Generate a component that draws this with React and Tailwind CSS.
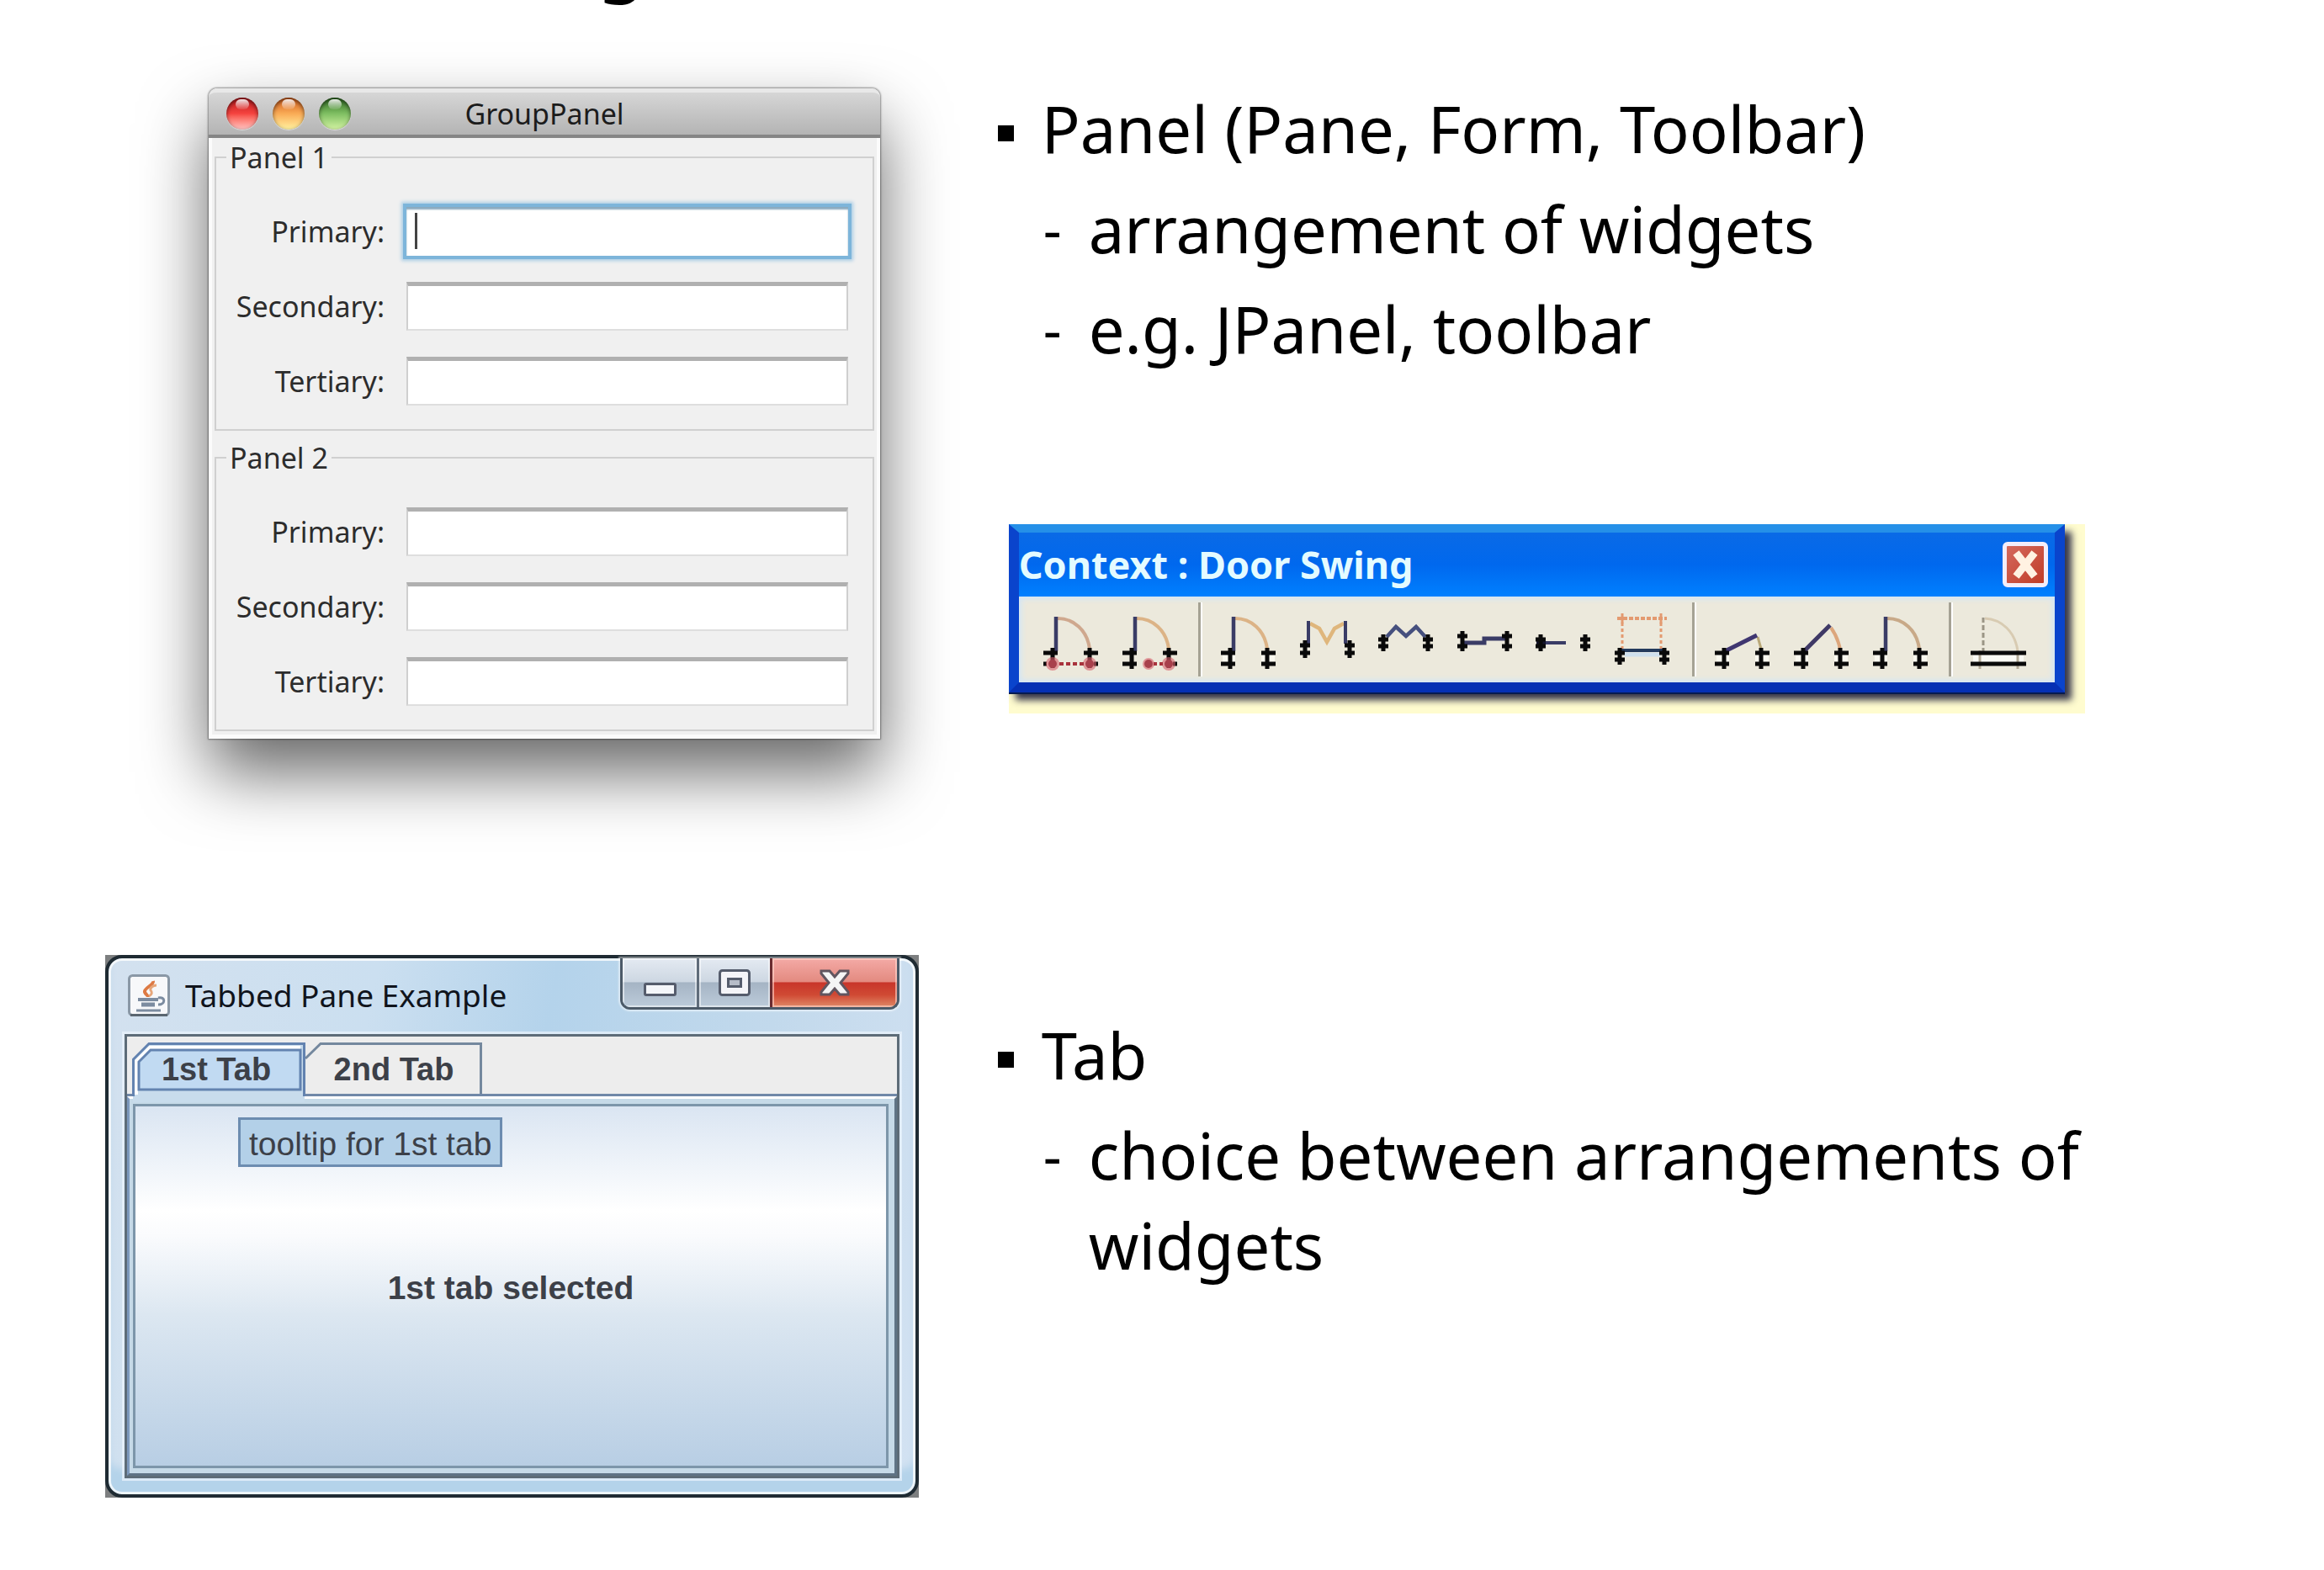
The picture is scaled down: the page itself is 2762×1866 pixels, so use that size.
import React from 'react';

const TALL = 'M14 67H31M14 80H31M25 61V86M62 67H79M62 80H79M69 61V86';

function Posts() {
  return (
    <>
      <path d="M16 73.500H31M62 73.500H78" stroke="#faf8ef" strokeWidth="8" />
      <path d={TALL} stroke="#0a0a0a" strokeWidth="5" fill="none" />
    </>
  );
}

function SmallPost({ x, y, gap = 8 }) {
  return (
    <path
      d={`M${x - 6} ${y}h12M${x - 6} ${y + gap}h12M${x} ${y - 6}v${gap + 12}`}
      stroke="#0a0a0a"
      strokeWidth="5"
      fill="none"
    />
  );
}

function Door({ arc = '#dcb386' }) {
  return (
    <g fill="none">
      <path d="M31 26C50 26 66 40 69 62" stroke={arc} strokeWidth="4" />
      <path d="M29 24V65" stroke="#3a3c66" strokeWidth="4.5" />
    </g>
  );
}

const tools = [
  [
    {
      name: 'Single swing, full width',
      art: (
        <>
          <Door arc="#cfa88e" />
          <path d="M14 67H31M25 61V85M62 67H79M69 61V85M14 80h4M74 80h5" stroke="#0a0a0a" strokeWidth="5" />
          <circle cx="25" cy="80" r="8" fill="#d8606c" fillOpacity="0.6" />
          <circle cx="69" cy="80" r="8" fill="#d8606c" fillOpacity="0.6" />
          <path d="M33 80H63" stroke="#a8323c" strokeWidth="4" strokeDasharray="5 3" />
          <circle cx="25" cy="80" r="5" fill="#a8404c" />
          <circle cx="69" cy="80" r="5" fill="#a8404c" />
        </>
      ),
    },
    {
      name: 'Single swing, part width',
      art: (
        <>
          <Door />
          <path d="M14 67H31M14 80H31M25 61V86M62 67H79M69 61V85M74 80h5" stroke="#0a0a0a" strokeWidth="5" />
          <circle cx="45" cy="80" r="7" fill="#d8606c" fillOpacity="0.6" />
          <circle cx="69" cy="80" r="8" fill="#d8606c" fillOpacity="0.6" />
          <path d="M51 80H64" stroke="#a8323c" strokeWidth="4" strokeDasharray="4 3" />
          <circle cx="45" cy="80" r="5" fill="#a8404c" />
          <circle cx="69" cy="80" r="5" fill="#a8404c" />
        </>
      ),
    },
  ],
  [
    { name: 'Single swing', art: (<><Door /><Posts /></>) },
    {
      name: 'Double swing',
      art: (
        <>
          <path d="M26 32L37 38L46 54L55 38L66 32" fill="none" stroke="#dfb67c" strokeWidth="4.5" />
          <path d="M24 29V56M68 29V56" stroke="#3a3c66" strokeWidth="4" />
          <SmallPost x={20} y={58} gap={9} />
          <SmallPost x={73} y={58} gap={9} />
        </>
      ),
    },
    {
      name: 'Bifold',
      art: (
        <>
          <path d="M23 48L34 36L46 47L58 36L69 48" fill="none" stroke="#46507e" strokeWidth="4.5" />
          <SmallPost x={19} y={51} />
          <SmallPost x={72} y={51} />
        </>
      ),
    },
    {
      name: 'Bypass sliding',
      art: (
        <>
          <path d="M20 55H45V50H71" fill="none" stroke="#3a3c66" strokeWidth="5" />
          <SmallPost x={19} y={47} gap={12} />
          <SmallPost x={72} y={47} gap={12} />
        </>
      ),
    },
    {
      name: 'Pocket',
      art: (
        <>
          <path d="M18 55H48" stroke="#3a3c66" strokeWidth="4" />
          <path d="M13 51h11v8h-11z" fill="#14142c" />
          <SmallPost x={18} y={51} />
          <SmallPost x={71} y={51} />
        </>
      ),
    },
    {
      name: 'Overhead',
      art: (
        <>
          <g fill="none" stroke="#e39a70">
            <path d="M15 26H74" strokeWidth="4" strokeDasharray="5 2" />
            <path d="M21 31V62M67 31V62" strokeWidth="3" strokeDasharray="4 3" />
            <path d="M21 20V32M67 20V32" strokeWidth="3" />
          </g>
          <path d="M24 69H66" stroke="#cfe0ee" strokeWidth="5" />
          <path d="M18 64H72" stroke="#233a5c" strokeWidth="4" />
          <SmallPost x={18} y={67} />
          <SmallPost x={71} y={67} />
        </>
      ),
    },
  ],
  [
    {
      name: 'Swing 30 degrees',
      art: (
        <>
          <path d="M65 48L69 62" stroke="#b9a878" strokeWidth="3" />
          <path d="M26 65L64 46" stroke="#3f3670" strokeWidth="5" />
          <Posts />
        </>
      ),
    },
    {
      name: 'Swing 60 degrees',
      art: (
        <>
          <path d="M58 37Q66 48 69 63" fill="none" stroke="#dca67c" strokeWidth="4" />
          <path d="M26 65L57 34" stroke="#3f3966" strokeWidth="5" />
          <Posts />
        </>
      ),
    },
    { name: 'Swing 90 degrees', art: (<><Door arc="#c8a988" /><Posts /></>) },
  ],
  [
    {
      name: 'Opening only',
      art: (
        <>
          <path d="M30 26C50 27 66 42 69 65" fill="none" stroke="#d8cbb2" strokeWidth="3" />
          <path d="M28 25V65" stroke="#9b9686" strokeWidth="3" strokeDasharray="6 3" />
          <path d="M16 74H76" stroke="#fafaf4" strokeWidth="8" />
          <path d="M24 64V86M69 64V86" stroke="#b4ab98" strokeWidth="3" />
          <path d="M13 67H79M13 80H79" stroke="#0a0a0a" strokeWidth="5" />
        </>
      ),
    },
  ],
];

function Light({ label, className }) {
  return (
    <button
      type="button"
      aria-label={label}
      className={`relative size-[38px] overflow-hidden rounded-full shadow-[inset_0_2px_5px_rgba(0,0,0,0.55),0_1px_1px_rgba(255,255,255,0.5)] ${className}`}
    >
      <span className="absolute top-[2px] left-[11px] h-[12px] w-[16px] rounded-full bg-gradient-to-b from-white/90 to-white/10" />
    </button>
  );
}

function Field({ id, label, focused }) {
  return (
    <>
      <label htmlFor={id} className="text-right">{label}</label>
      <div className="relative">
        <input
          id={id}
          type="text"
          className={
            focused
              ? 'block h-[58px] w-full bg-white px-3 caret-transparent shadow-[inset_0_3px_2px_#8aaabf,0_0_0_4px_#7db5da,0_0_4px_6px_#a9cde5] outline-none'
              : 'block h-[58px] w-full border-x-2 border-t-[5px] border-b-2 border-x-[#cfcfcf] border-t-[#b0b0b0] border-b-[#dedede] bg-white px-3 outline-none'
          }
        />
        {focused && <span className="absolute top-[7px] left-[10px] h-[43px] w-[3px] bg-[#444]" />}
      </div>
    </>
  );
}

function FormPanel({ id, title, focusFirst }) {
  return (
    <fieldset className="border-2 border-[#d0d0d0]">
      <legend className="ml-[12px] px-[4px] leading-[42px]">{title}</legend>
      <div className="grid grid-cols-[200px_1fr] items-center gap-x-[26px] gap-y-[31px] pt-[38px] pr-[29px] pb-[28px]">
        <Field id={`${id}-primary`} label="Primary:" focused={focusFirst} />
        <Field id={`${id}-secondary`} label="Secondary:" />
        <Field id={`${id}-tertiary`} label="Tertiary:" />
      </div>
    </fieldset>
  );
}

function GroupPanelWindow() {
  return (
    <div className="w-[798px] rounded-t-[10px] bg-[#f0f0f0] text-[34px] text-[#2c2c2c] shadow-[0_0_2px_1px_rgba(0,0,0,0.4),0_40px_80px_rgba(0,0,0,0.6)]">
      <div className="flex h-[59px] items-center rounded-t-[10px] border-t-[5px] border-b-4 border-t-[#e8e8e8] border-b-[#858585] bg-gradient-to-b from-[#d6d6d6] to-[#b4b4b4] px-[21px]">
        <div className="flex w-[174px] gap-[17px]">
          <Light label="Close" className="bg-gradient-to-b from-[#b8141c] via-[#f5433f] to-[#ffc4c4]" />
          <Light label="Minimize" className="bg-gradient-to-b from-[#cf5a18] via-[#f9ab56] to-[#fff3a0]" />
          <Light label="Zoom" className="bg-gradient-to-b from-[#2c6b20] via-[#7fbf62] to-[#d4f5a4]" />
        </div>
        <h2 className="flex-1 pr-[174px] pl-[-10px] text-center leading-[40px] text-[#1c1c1c]">GroupPanel</h2>
      </div>
      <form className="flex flex-col gap-[11px] border-x-4 border-b-[5px] border-white/70 px-[3px] pt-[2px] pb-[4px]">
        <FormPanel id="p1" title="Panel 1" focusFirst />
        <FormPanel id="p2" title="Panel 2" />
      </form>
    </div>
  );
}

function DoorToolbar() {
  return (
    <div className="w-full max-w-[1279px] bg-[#fffccf] pr-[24px] pb-[25px]">
      <div className="border-x-[12px] border-t-[10px] border-b-[12px] border-x-[#0a44cc] border-t-[#2590e8] border-b-[#0530b4] bg-[#0a3fc4] shadow-[0_2px_0_#061a50,8px_9px_8px_rgba(20,20,50,0.85)]">
        <div className="flex h-[76px] items-center justify-between bg-gradient-to-b from-[#0a6ae6] via-[#0068ee] to-[#0080ff] pr-[8px]">
          <h2 className="text-[45px] leading-[56px] font-bold text-[#e4fbff]">Context : Door Swing</h2>
          <button type="button" aria-label="Close" className="flex size-[54px] items-center justify-center rounded-[6px] border-[5px] border-[#f3edfa] bg-gradient-to-br from-[#d4685c] to-[#c03c28]">
            <svg width="32" height="36" viewBox="0 0 32 36">
              <path d="M5 4L27 32M27 4L5 32" stroke="#fff2e2" strokeWidth="9" />
            </svg>
          </button>
        </div>
        <div className="flex h-[102px] items-center bg-[#ece9dc] pl-[15px] shadow-[inset_0_0_6px_3px_#d3e6f6]">
          {tools.map((group, i) => (
            <React.Fragment key={i}>
              {i > 0 && <span className="mr-[8px] ml-[10px] h-[88px] w-[5px] border-r-2 border-l-[3px] border-r-white border-l-[#a5a294]" />}
              {group.map((tool) => (
                <button key={tool.name} type="button" aria-label={tool.name} className="h-[102px] w-[94px]">
                  <svg className="size-full" viewBox="0 0 94 102">{tool.art}</svg>
                </button>
              ))}
            </React.Fragment>
          ))}
        </div>
      </div>
    </div>
  );
}

function JavaIcon() {
  return (
    <svg width="50" height="50" viewBox="0 0 50 50">
      <rect x="1.500" y="1.500" width="47" height="47" rx="4" fill="#f7f8fa" stroke="#8a98a6" strokeWidth="3" />
      <path d="M3 48.500H47" stroke="#5a6670" strokeWidth="3" />
      <g fill="none">
        <path d="M30 8C31 13 19 16 20 21C21 24 24 25 24 27" stroke="#dd7a44" strokeWidth="4" />
        <path d="M34 13C30 13 26 16 27 19C29 21 29 24 25 26" stroke="#e6a67a" strokeWidth="3" />
        <path d="M12 30H36" stroke="#7c8ca0" strokeWidth="4" />
        <path d="M16 36H32" stroke="#7c8ca0" strokeWidth="5" />
        <path d="M10 43H39" stroke="#7c8ca0" strokeWidth="3" />
        <path d="M36 28C45 26 45 36 36 36" stroke="#7c8ca0" strokeWidth="3" />
      </g>
    </svg>
  );
}

function WindowButtons() {
  return (
    <div className="flex h-[61px] overflow-hidden rounded-b-[12px] border-x-[3px] border-b-[3px] border-[#4c5a68] shadow-[0_0_2px_2px_rgba(255,255,255,0.5)]">
      <button type="button" aria-label="Minimize" className="flex w-[88px] items-center justify-center bg-[linear-gradient(#e4eaf2_0%,#cdd7e2_48%,#a5b4c4_50%,#bccbda_100%)] pt-[16px] shadow-[inset_0_0_0_2px_rgba(255,255,255,0.5)]">
        <span className="h-[16px] w-[39px] rounded-[3px] border-[3px] border-[#555c6c] bg-[#f4f6fa]" />
      </button>
      <button type="button" aria-label="Maximize" className="flex w-[87px] items-center justify-center border-l-[3px] border-[#5f6c7a] bg-[linear-gradient(#e4eaf2_0%,#cdd7e2_48%,#a5b4c4_50%,#bccbda_100%)] shadow-[inset_0_0_0_2px_rgba(255,255,255,0.5)]">
        <svg width="38" height="32" viewBox="0 0 38 32">
          <rect x="1.500" y="1.500" width="35" height="29" rx="3" fill="#f4f4f8" stroke="#555c6c" strokeWidth="3" />
          <rect x="11.500" y="11.500" width="15" height="9" fill="#b6bcc8" stroke="#555c6c" strokeWidth="3" />
        </svg>
      </button>
      <button type="button" aria-label="Close" className="flex w-[151px] items-center justify-center border-l-[3px] border-[#6b2c30] bg-[linear-gradient(#f4aaa6_0%,#e38a80_48%,#c8352a_50%,#d04a34_75%,#e08a68_100%)] shadow-[inset_0_0_0_2px_rgba(255,215,205,0.6)]">
        <svg width="36" height="32" viewBox="0 0 36 32">
          <path d="M2 2H12L18 9L24 2H34V5L25 16L34 27V30H24L18 23L12 30H2V27L11 16L2 5Z" fill="#f4f4f4" stroke="#61555f" strokeWidth="3" />
        </svg>
      </button>
    </div>
  );
}

function TabbedPaneWindow() {
  return (
    <div className="w-[967px] bg-[#7d7f80]">
      <div className="rounded-[20px] border-4 border-[#1f2b33] bg-[linear-gradient(100deg,#d3e1ef_0%,#cbdff0_30%,#b4d3eb_50%,#c2d9ec_75%,#d3e2f2_100%)] px-[19px] pb-[19px] shadow-[inset_0_0_0_3px_rgba(255,255,255,0.75),inset_0_-30px_10px_#b4d3ea]">
        <div className="flex h-[90px] items-start justify-between">
          <div className="flex items-center gap-[18px] pt-[19px] pl-[4px]">
            <JavaIcon />
            <h2 className="text-[37px] leading-[50px] text-[#10141c]">Tabbed Pane Example</h2>
          </div>
          <WindowButtons />
        </div>
        <div className="border-[3px] border-[#5d6c78] bg-[#ededed] font-['Liberation_Sans',Arial,sans-serif] text-[38px] text-[#3c4048] shadow-[0_0_0_3px_rgba(235,244,252,0.7)]">
          <div role="tablist" className="flex h-[71px] items-end border-b-[3px] border-[#7088a8] pl-[6px] font-bold">
            <button type="button" role="tab" aria-selected="true" className="relative z-10 mb-[-3px] h-[64px] w-[206px]">
              <svg className="absolute inset-0 overflow-visible" width="206" height="64" viewBox="0 0 206 64">
                <path d="M1 71V20L20 1H205V71Z" fill="#c8dcec" />
                <path d="M5 62V22L21 6H200" fill="none" stroke="#fff" strokeWidth="4" />
                <path d="M8 56V23L22 9H200V56Z" fill="#c1daf2" stroke="#6383b0" strokeWidth="3" />
                <path d="M1.500 64V20L20 1.500H204.500V64" fill="none" stroke="#6383b0" strokeWidth="3" />
              </svg>
              <span className="relative pr-[6px]">1st Tab</span>
            </button>
            <button type="button" role="tab" aria-selected="false" className="relative h-[61px] w-[210px] pt-[3px]">
              <svg className="absolute inset-0" width="210" height="61" viewBox="0 0 210 61">
                <path d="M0 19L18 1.500H208.500V61" fill="none" stroke="#74889e" strokeWidth="3" />
              </svg>
              <span className="relative">2nd Tab</span>
            </button>
          </div>
          <div role="tabpanel" className="border-t-[3px] border-r-[3px] border-b-[3px] border-l-[3px] border-t-white border-r-[#5f7385] border-b-[#5f7385] border-l-[#7c98bc] bg-[#c6dae8] pt-[6px] pr-[7px] pb-[6px] pl-[4px]">
            <div className="relative flex h-[433px] items-center justify-center border-[3px] border-[#7d96aa] bg-[linear-gradient(#dae5f2_0%,#ffffff_29%,#fafbfd_36%,#dce7f1_58%,#b8cee4_100%)]">
              <p className="pt-[6px] text-[39px] font-bold">1st tab selected</p>
              <div role="tooltip" className="absolute top-[13px] left-[122px] border-[3px] border-[#6c8cb0] bg-[#b3d0e8] px-[10px] pt-[4px] text-[39px] leading-[49px] whitespace-nowrap">tooltip for 1st tab</div>
            </div>
          </div>
        </div>
      </div>
    </div>
  );
}

function Topic({ title, points }) {
  return (
    <ul className="text-[76px] leading-[107px] text-black">
      <li>
        <div className="flex items-start">
          <span className="mt-[50px] ml-[2px] size-[19px] shrink-0 bg-black" />
          <span className="ml-[33px]">{title}</span>
        </div>
        <ul className="mt-[12px] flex flex-col gap-[12px] pl-[56px]">
          {points.map((p) => (
            <li key={p} className="flex items-start">
              <span className="w-[54px] shrink-0 text-[68px]">-</span>
              <span>{p}</span>
            </li>
          ))}
        </ul>
      </li>
    </ul>
  );
}

export default function App() {
  return (
    <div className="min-h-screen overflow-hidden bg-white pb-[86px] font-['Noto_Sans','Open_Sans',sans-serif]">
      <header className="flex h-[8px] items-end overflow-hidden pl-[712px]">
        <h1 className="text-[84px] leading-[108px] font-bold text-black">g</h1>
      </header>
      <main className="grid grid-cols-[3fr_4fr] gap-y-[257px]">
        <div className="pt-[97px] pl-[248px]">
          <GroupPanelWindow />
        </div>
        <div className="flex flex-col gap-[179px] pt-[91px]">
          <Topic title="Panel (Pane, Form, Toolbar)" points={['arrangement of widgets', 'e.g. JPanel, toolbar']} />
          <div className="ml-[15px]">
            <DoorToolbar />
          </div>
        </div>
        <div className="pl-[125px]">
          <TabbedPaneWindow />
        </div>
        <div className="pt-[65px] pr-[240px]">
          <Topic title="Tab" points={['choice between arrangements of widgets']} />
        </div>
      </main>
    </div>
  );
}
